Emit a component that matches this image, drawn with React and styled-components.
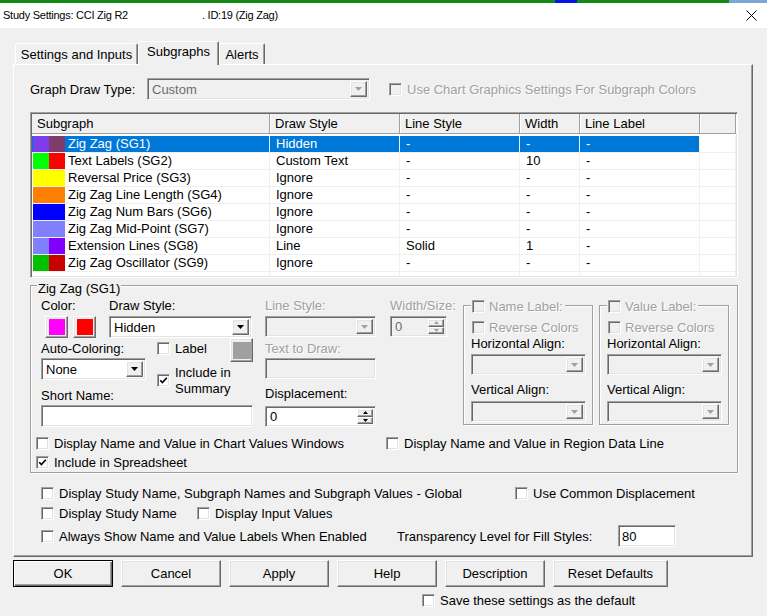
import React from 'react'
import styled, { createGlobalStyle, css } from 'styled-components'

const GlobalStyle = createGlobalStyle`
  html, body {
    margin: 0;
    padding: 0;
    background: #f0f0f0;
  }
  body {
    font-family: "Liberation Sans", Arial, sans-serif;
    font-size: 13px;
    color: #000;
  }
`

// classic 3D borders
const sunken = css`
    border: 1px solid;
    border-color: #a0a0a0 #fff #fff #a0a0a0;
    box-shadow: inset 1px 1px #696969, inset -1px -1px #e3e3e3;
`

const raised = css`
    border: 1px solid;
    border-color: #fff #696969 #696969 #fff;
    box-shadow: inset -1px -1px #a0a0a0, inset 1px 1px #e3e3e3;
`

const etched = css`
    border: 1px solid #a0a0a0;
    box-shadow: inset 1px 1px #fff, 1px 1px #fff;
`

const Window = styled.div`
    width: 767px;
    height: 616px;
    overflow: hidden;
    background: #f0f0f0;
`

const TopStrip = styled.div`
    height: 3px;
    background: linear-gradient(to right,
        #138a13 0 555px, #0a14e8 555px 577px,
        #138a13 577px 729px, #7aa7d6 729px);
`

const TitleBar = styled.div`
    height: 25px;
    box-sizing: border-box;
    background: #fff;
    display: flex;
    justify-content: space-between;
    align-items: flex-start;
    padding: 6px 10px 0 3px;
`

const TitleText = styled.div`
    display: flex;
    font-size: 11px;
    line-height: 13px;
    letter-spacing: -0.25px;
    white-space: nowrap;
`

const TitleName = styled.span`
    width: 199px;
`

const CloseIcon = styled.svg`
    margin-top: 1px;
`

const Content = styled.div`
    padding-left: 13px;
`

const TabStrip = styled.div`
    margin-top: 13px;
    height: 23px;
    display: flex;
    align-items: flex-end;
    padding-left: 2px;
`

const Tab = styled.div`
    width: ${({ $w }) => $w}px;
    height: ${({ $active }) => ($active ? 24 : 21)}px;
    box-sizing: border-box;
    display: flex;
    align-items: center;
    justify-content: center;
    background: #f0f0f0;
    border-top: 1px solid #fff;
    border-left: 1px solid #fff;
    border-right: 1px solid #696969;
    border-radius: 2px 2px 0 0;
    box-shadow: inset -1px 0 #a0a0a0;
    ${({ $active }) => $active && css`
        position: relative;
        z-index: 1;
        margin-bottom: -1px;
        padding-bottom: 4px;
    `}
`

const TabPanel = styled.div`
    width: 740px;
    height: 493px;
    box-sizing: border-box;
    border: 1px solid;
    border-color: #fff #696969 #696969 #fff;
    box-shadow: inset -1px -1px #a0a0a0;
    padding: 13px 0 0 16px;
`

const DrawRow = styled.div`
    display: flex;
    align-items: center;
    height: 22px;
`

const FieldLabel = styled.span`
    line-height: 15px;
    white-space: nowrap;
    color: ${({ $disabled }) => ($disabled ? '#a0a0a0' : '#000')};
    text-shadow: ${({ $disabled }) => ($disabled ? '1px 1px #fff' : 'none')};
    width: ${({ $w }) => ($w ? `${$w}px` : 'auto')};
    flex-shrink: 0;
`

const Box = styled.span`
    ${sunken};
    width: 13px;
    height: 13px;
    box-sizing: border-box;
    flex-shrink: 0;
    display: inline-flex;
    align-items: center;
    justify-content: center;
    background: ${({ $disabled }) => ($disabled ? '#f0f0f0' : '#fff')};
`

const CheckField = styled.label`
    display: flex;
    align-items: center;
    gap: ${({ $gap }) => ($gap ?? 5)}px;
    width: ${({ $w }) => ($w ? `${$w}px` : 'auto')};
    flex-shrink: 0;
    margin-left: ${({ $ml }) => $ml || 0}px;
`

const CheckText = styled.span`
    line-height: ${({ $lh }) => $lh || 15}px;
    white-space: nowrap;
    color: ${({ $disabled }) => ($disabled ? '#a0a0a0' : '#000')};
    text-shadow: ${({ $disabled }) => ($disabled ? '1px 1px #fff' : 'none')};
`

const Check = ({ checked, disabled, children, w, ml, lh, gap }) => (
    <CheckField $w={w} $ml={ml} $gap={gap}>
        <Box $disabled={disabled}>
            {checked && (
                <svg width="9" height="9" viewBox="0 0 9 9">
                    <path d="M1.2 4.2 L3.4 6.6 L7.8 1.8" fill="none" stroke="#000" strokeWidth="1.7" />
                </svg>
            )}
        </Box>
        {children && <CheckText $disabled={disabled} $lh={lh}>{children}</CheckText>}
    </CheckField>
)

const ComboFrame = styled.div`
    ${sunken};
    width: ${({ $w }) => $w}px;
    height: ${({ $h }) => $h || 21}px;
    box-sizing: border-box;
    padding: 2px;
    display: flex;
    align-items: stretch;
    background: ${({ $disabled }) => ($disabled ? '#f0f0f0' : '#fff')};
    color: ${({ $disabled }) => ($disabled ? '#6d6d6d' : '#000')};
    flex-shrink: 0;
`

const ComboText = styled.span`
    flex: 1;
    padding-left: 2px;
    display: flex;
    align-items: center;
    white-space: nowrap;
`

const DropButton = styled.span`
    ${raised};
    width: 17px;
    box-sizing: border-box;
    background: #f0f0f0;
    display: flex;
    align-items: center;
    justify-content: center;
`

const Combo = ({ w, h, value, disabled }) => (
    <ComboFrame $w={w} $h={h} $disabled={disabled}>
        <ComboText>{value}</ComboText>
        <DropButton>
            <svg width="7" height="4" viewBox="0 0 7 4">
                <path d="M0 0 H7 L3.5 4 Z" fill={disabled ? '#a0a0a0' : '#000'} />
            </svg>
        </DropButton>
    </ComboFrame>
)

const SpinButtons = styled.span`
    width: 16px;
    display: flex;
    flex-direction: column;
`

const SpinHalf = styled.span`
    ${raised};
    flex: 1;
    box-sizing: border-box;
    background: #f0f0f0;
    display: flex;
    align-items: center;
    justify-content: center;
`

const Spin = ({ w, h, value, disabled }) => {
    const fill = disabled ? '#a0a0a0' : '#000'
    return (
        <ComboFrame $w={w} $h={h} $disabled={disabled}>
            <ComboText>{value}</ComboText>
            <SpinButtons>
                <SpinHalf>
                    <svg width="5" height="3" viewBox="0 0 5 3"><path d="M0 3 H5 L2.5 0 Z" fill={fill} /></svg>
                </SpinHalf>
                <SpinHalf>
                    <svg width="5" height="3" viewBox="0 0 5 3"><path d="M0 0 H5 L2.5 3 Z" fill={fill} /></svg>
                </SpinHalf>
            </SpinButtons>
        </ComboFrame>
    )
}

const TextBox = styled.div`
    ${sunken};
    width: ${({ $w }) => $w}px;
    height: ${({ $h }) => $h || 22}px;
    box-sizing: border-box;
    padding-left: 3px;
    display: flex;
    align-items: center;
    background: ${({ $disabled }) => ($disabled ? '#f0f0f0' : '#fff')};
`

/* ---------- list ---------- */

const List = styled.div`
    ${sunken};
    margin-top: 12px;
    width: 708px;
    height: 166px;
    box-sizing: border-box;
    padding: 1px;
    background: #fff;
    overflow: hidden;
`

const HeaderRow = styled.div`
    display: flex;
    height: 19px;
    background: #f0f0f0;
    border-bottom: 1px solid #a0a0a0;
`

const HeaderCell = styled.div`
    width: ${({ $w }) => ($w ? `${$w}px` : 'auto')};
    flex: ${({ $w }) => ($w ? '0 0 auto' : '1')};
    box-sizing: border-box;
    padding-left: 5px;
    line-height: 19px;
    border-right: 1px solid #a0a0a0;
    box-shadow: 1px 0 #fff;
`

const Rows = styled.div`
    padding-top: 2px;
`

const Row = styled.div`
    display: flex;
    height: 17px;
    box-sizing: border-box;
    border-bottom: 1px solid #f0f0f0;
`

const Cell = styled.div`
    width: ${({ $w }) => ($w ? `${$w}px` : 'auto')};
    flex: ${({ $w }) => ($w ? '0 0 auto' : '1')};
    box-sizing: border-box;
    display: flex;
    align-items: center;
    padding-left: ${({ $pl }) => ($pl ?? 6)}px;
    border-right: 1px solid #f0f0f0;
    line-height: 16px;
    white-space: nowrap;
    background: ${({ $selected }) => ($selected ? '#0078d7' : 'transparent')};
    color: ${({ $selected }) => ($selected ? '#fff' : '#000')};
`

const Swatch = styled.span`
    width: 16px;
    height: 16px;
    flex-shrink: 0;
    background: ${({ $color }) => $color};
`

const SwatchPair = styled.span`
    display: flex;
    margin-left: 1px;
    margin-right: 3px;
`

const columns = [
    { title: 'Subgraph', w: 238 },
    { title: 'Draw Style', w: 130 },
    { title: 'Line Style', w: 120 },
    { title: 'Width', w: 60 },
    { title: 'Line Label', w: 120 },
]

// the selected row shows its colours blended with the highlight blue
const subgraphs = [
    { colors: ['#7f3ceb', '#7f3c6b'], name: 'Zig Zag (SG1)', draw: 'Hidden', line: '-', width: '-', label: '-', selected: true },
    { colors: ['#00ff00', '#ff0000'], name: 'Text Labels (SG2)', draw: 'Custom Text', line: '-', width: '10', label: '-' },
    { colors: ['#ffff00', '#ffff00'], name: 'Reversal Price (SG3)', draw: 'Ignore', line: '-', width: '-', label: '-' },
    { colors: ['#ff8000', '#ff8000'], name: 'Zig Zag Line Length (SG4)', draw: 'Ignore', line: '-', width: '-', label: '-' },
    { colors: ['#0000ff', '#0000ff'], name: 'Zig Zag Num Bars (SG6)', draw: 'Ignore', line: '-', width: '-', label: '-' },
    { colors: ['#8080ff', '#8080ff'], name: 'Zig Zag Mid-Point (SG7)', draw: 'Ignore', line: '-', width: '-', label: '-' },
    { colors: ['#8080ff', '#8000ff'], name: 'Extension Lines (SG8)', draw: 'Line', line: 'Solid', width: '1', label: '-' },
    { colors: ['#00c000', '#c80000'], name: 'Zig Zag Oscillator (SG9)', draw: 'Ignore', line: '-', width: '-', label: '-' },
]

/* ---------- group box ---------- */

const GroupBox = styled.div`
    ${etched};
    position: relative;
    margin-top: 7px;
    width: 708px;
    height: 188px;
    box-sizing: border-box;
    padding: 12px 0 0 5px;
`

const GroupLegend = styled.span`
    position: absolute;
    top: -5px;
    left: 6px;
    padding: 0 1px;
    line-height: 15px;
    background: #f0f0f0;
`

const UpperGrid = styled.div`
    margin-left: 5px;
    display: grid;
    grid-template-columns: 68px 37px 11px 73px 23px 12px 111px 14px 57px 16px 130px 6px 130px;
    grid-template-rows: 18px 22px 20px 22px 23px 24px;
`

const Area = styled.div`
    grid-column: ${({ $col }) => $col};
    grid-row: ${({ $row }) => $row};
    align-self: ${({ $align }) => $align || 'start'};
    margin-bottom: ${({ $mb }) => $mb || 0}px;
    margin-top: ${({ $mt }) => $mt || 0}px;
    display: flex;
`

const ColorButtons = styled.div`
    display: flex;
    gap: 5px;
    margin-left: 4px;
`

const ColorButton = styled.span`
    ${raised};
    width: ${({ $size }) => $size || 23}px;
    height: ${({ $h }) => $h || 22}px;
    box-sizing: border-box;
    background: #f0f0f0;
    display: flex;
    align-items: center;
    justify-content: center;
`

const ColorChip = styled.span`
    width: ${({ $w }) => $w || 16}px;
    height: ${({ $h }) => $h || 16}px;
    background: ${({ $color }) => $color};
`

const LabelBox = styled.div`
    ${etched};
    position: relative;
    width: 130px;
    height: 120px;
    box-sizing: border-box;
    padding: 14px 0 0 7px;
    display: flex;
    flex-direction: column;
    align-items: flex-start;
`

const LabelBoxLegend = styled.div`
    position: absolute;
    top: -7px;
    left: 7px;
    padding: 0 2px 0 1px;
    background: #f0f0f0;
`

const Stack = styled.div`
    margin-top: ${({ $mt }) => $mt || 0}px;
    margin-left: ${({ $ml }) => $ml || 0}px;
`

const CheckRow = styled.div`
    display: flex;
    align-items: center;
    height: ${({ $h }) => $h || 19}px;
    margin-top: ${({ $mt }) => $mt || 0}px;
`

const Options = styled.div`
    margin-top: 10px;
    padding-left: 11px;
`

const ButtonRow = styled.div`
    margin-top: 3px;
    display: flex;
    gap: 8px;
`

const DialogButton = styled.button`
    ${raised};
    width: ${({ $w }) => $w || 100}px;
    height: 27px;
    padding: 0;
    background: #f0f0f0;
    font: inherit;
    color: #000;
    ${({ $default }) => $default && css`
        border: 1px solid #000;
        box-shadow: inset 1px 1px #fff, inset -1px -1px #696969, inset -2px -2px #a0a0a0;
    `}
`

const SaveRow = styled.div`
    margin-top: 6px;
    margin-left: 409px;
`

const NameValueBox = ({ title }) => (
    <LabelBox>
        <LabelBoxLegend>
            <Check disabled gap={4}>{title}</Check>
        </LabelBoxLegend>
        <Stack $ml={1}>
            <Check disabled gap={4}>Reverse Colors</Check>
        </Stack>
        <Stack $mt={1}><FieldLabel>Horizontal Align:</FieldLabel></Stack>
        <Stack $mt={3}><Combo w={115} disabled /></Stack>
        <Stack $mt={7}><FieldLabel>Vertical Align:</FieldLabel></Stack>
        <Stack $mt={4}><Combo w={115} disabled /></Stack>
    </LabelBox>
)

const App = () => (
    <Window>
        <GlobalStyle />
        <TopStrip />
        <TitleBar>
            <TitleText>
                <TitleName>Study Settings: CCI Zig R2</TitleName>
                <span>. ID:19 (Zig Zag)</span>
            </TitleText>
            <CloseIcon width="11" height="11" viewBox="0 0 11 11">
                <path d="M0.5 0.5 L10.5 10.5 M10.5 0.5 L0.5 10.5" stroke="#000" strokeWidth="1" />
            </CloseIcon>
        </TitleBar>

        <Content>
            <TabStrip>
                <Tab $w={123}>Settings and Inputs</Tab>
                <Tab $w={81} $active>Subgraphs</Tab>
                <Tab $w={46}>Alerts</Tab>
            </TabStrip>

            <TabPanel>
                <DrawRow>
                    <FieldLabel $w={117}>Graph Draw Type:</FieldLabel>
                    <Combo w={223} h={22} value="Custom" disabled />
                    <Check disabled ml={19}>Use Chart Graphics Settings For Subgraph Colors</Check>
                </DrawRow>

                <List>
                    <HeaderRow>
                        {columns.map((c) => (
                            <HeaderCell key={c.title} $w={c.w}>{c.title}</HeaderCell>
                        ))}
                        <HeaderCell />
                    </HeaderRow>
                    <Rows>
                        {subgraphs.map((s) => (
                            <Row key={s.name}>
                                <Cell $w={238} $pl={0} $selected={s.selected}>
                                    <SwatchPair>
                                        <Swatch $color={s.colors[0]} />
                                        <Swatch $color={s.colors[1]} />
                                    </SwatchPair>
                                    {s.name}
                                </Cell>
                                <Cell $w={130} $selected={s.selected}>{s.draw}</Cell>
                                <Cell $w={120} $selected={s.selected}>{s.line}</Cell>
                                <Cell $w={60} $selected={s.selected}>{s.width}</Cell>
                                <Cell $w={120} $selected={s.selected}>{s.label}</Cell>
                                <Cell />
                            </Row>
                        ))}
                        <Row>
                            <Cell $w={238} />
                            <Cell $w={130} />
                            <Cell $w={120} />
                            <Cell $w={60} />
                            <Cell $w={120} />
                            <Cell />
                        </Row>
                    </Rows>
                </List>

                <GroupBox>
                    <GroupLegend>Zig Zag (SG1)</GroupLegend>
                    <UpperGrid>
                        <Area $col="1 / 2" $row="1"><FieldLabel>Color:</FieldLabel></Area>
                        <Area $col="1 / 2" $row="2">
                            <ColorButtons>
                                <ColorButton><ColorChip $color="#ff00ff" /></ColorButton>
                                <ColorButton><ColorChip $color="#ff0000" /></ColorButton>
                            </ColorButtons>
                        </Area>
                        <Area $col="2 / 6" $row="1"><FieldLabel>Draw Style:</FieldLabel></Area>
                        <Area $col="2 / 6" $row="2"><Combo w={143} h={22} value="Hidden" /></Area>

                        <Area $col="7 / 8" $row="1"><FieldLabel $disabled>Line Style:</FieldLabel></Area>
                        <Area $col="7 / 8" $row="2"><Combo w={111} disabled /></Area>
                        <Area $col="9 / 10" $row="1"><FieldLabel $disabled>Width/Size:</FieldLabel></Area>
                        <Area $col="9 / 10" $row="2"><Spin w={57} value="0" disabled /></Area>

                        <Area $col="11 / 12" $row="1 / 7" $mt={7}><NameValueBox title="Name Label:" /></Area>
                        <Area $col="13 / 14" $row="1 / 7" $mt={7}><NameValueBox title="Value Label:" /></Area>

                        <Area $col="1 / 4" $row="3" $align="center"><FieldLabel>Auto-Coloring:</FieldLabel></Area>
                        <Area $col="4 / 5" $row="3" $align="center"><Check>Label</Check></Area>
                        <Area $col="5 / 6" $row="3 / 5">
                            <ColorButton $size={24} $h={24}><ColorChip $color="#a0a0a0" $w={18} $h={17} /></ColorButton>
                        </Area>
                        <Area $col="7 / 8" $row="3" $align="center"><FieldLabel $disabled>Text to Draw:</FieldLabel></Area>

                        <Area $col="1 / 3" $row="4"><Combo w={105} h={22} value="None" /></Area>
                        <Area $col="4 / 6" $row="4 / 6" $align="center">
                            <Check checked lh={16}>Include in<br />Summary</Check>
                        </Area>
                        <Area $col="7 / 8" $row="4"><TextBox $w={111} $h={21} $disabled /></Area>

                        <Area $col="1 / 4" $row="5" $align="end"><FieldLabel>Short Name:</FieldLabel></Area>
                        <Area $col="7 / 8" $row="5" $align="end" $mb={2}><FieldLabel>Displacement:</FieldLabel></Area>
                        <Area $col="1 / 6" $row="6" $align="end"><TextBox $w={212} $h={22} /></Area>
                        <Area $col="7 / 8" $row="6" $align="end"><Spin w={111} value="0" /></Area>
                    </UpperGrid>

                    <CheckRow $mt={7}>
                        <Check w={350}>Display Name and Value in Chart Values Windows</Check>
                        <Check>Display Name and Value in Region Data Line</Check>
                    </CheckRow>
                    <CheckRow>
                        <Check checked>Include in Spreadsheet</Check>
                    </CheckRow>
                </GroupBox>

                <Options>
                    <CheckRow $h={20}>
                        <Check w={474}>Display Study Name, Subgraph Names and Subgraph Values - Global</Check>
                        <Check>Use Common Displacement</Check>
                    </CheckRow>
                    <CheckRow $h={20}>
                        <Check w={156}>Display Study Name</Check>
                        <Check>Display Input Values</Check>
                    </CheckRow>
                    <CheckRow $h={24} $mt={1}>
                        <Check w={356}>Always Show Name and Value Labels When Enabled</Check>
                        <FieldLabel $w={221}>Transparency Level for Fill Styles:</FieldLabel>
                        <TextBox $w={58} $h={22}>80</TextBox>
                    </CheckRow>
                </Options>
            </TabPanel>

            <ButtonRow>
                <DialogButton $default>OK</DialogButton>
                <DialogButton>Cancel</DialogButton>
                <DialogButton>Apply</DialogButton>
                <DialogButton>Help</DialogButton>
                <DialogButton>Description</DialogButton>
                <DialogButton $w={115}>Reset Defaults</DialogButton>
            </ButtonRow>

            <SaveRow>
                <Check>Save these settings as the default</Check>
            </SaveRow>
        </Content>
    </Window>
)

export default App
